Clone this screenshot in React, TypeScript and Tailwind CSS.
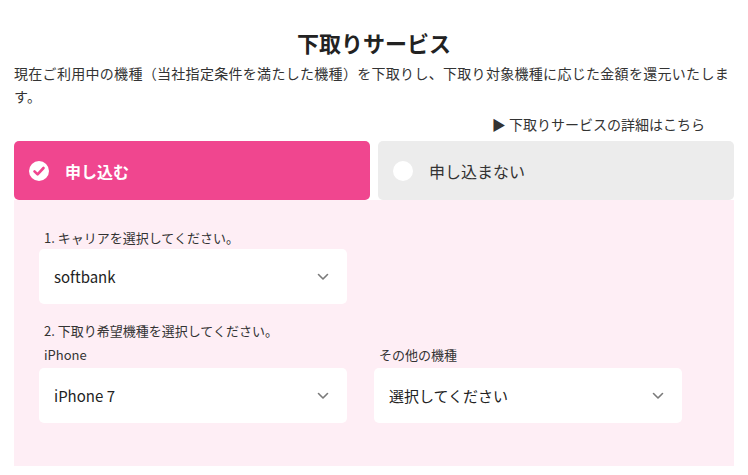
import React from "react";

function Chevron() {
  return (
    <svg width="12" height="8" viewBox="0 0 12 8" className="shrink-0">
      <polyline points="1.5,1.5 6,6 10.5,1.5" fill="none" stroke="#7a7a7a" strokeWidth="1.6" strokeLinecap="round" strokeLinejoin="round" />
    </svg>
  );
}

function Select({ value }: { value: string }) {
  return (
    <div className="flex h-[55px] w-[308px] items-center justify-between rounded-[5px] bg-white pl-[15px] pr-[18px]">
      <span className="text-[15px] leading-[20px] text-[#222]">{value}</span>
      <Chevron />
    </div>
  );
}

export default function App() {
  return (
    <div className="w-[748px] bg-white px-[14px] pt-[28px] font-['Noto_Sans_CJK_JP','Noto_Sans',sans-serif] text-[#333]">
      <h2 className="text-center text-[22px] font-bold leading-[28px] text-[#222]">下取りサービス</h2>
      <p className="mt-[6px] text-[14px] leading-[23px] tracking-[0.3px]">
        現在ご利用中の機種（当社指定条件を満たした機種）を下取りし、下取り対象機種に応じた金額を還元いたします。
      </p>
      <div className="mt-[6px] flex justify-end pr-[29px] text-[14px] leading-[20px]">
        <span>▶ 下取りサービスの詳細はこちら</span>
      </div>
      <div className="mt-[7px] flex gap-[8px]">
        <div className="flex h-[59px] flex-1 items-center gap-[16px] rounded-[5px] bg-[#f0468f] pl-[15px]">
          <svg width="20" height="20" viewBox="0 0 20 20">
            <circle cx="10" cy="10" r="10" fill="#fff" />
            <polyline points="5.5,10.3 8.6,13.4 14.5,7" fill="none" stroke="#f0468f" strokeWidth="2.6" strokeLinecap="round" strokeLinejoin="round" />
          </svg>
          <span className="text-[16px] font-bold leading-[22px] text-white">申し込む</span>
        </div>
        <div className="flex h-[59px] flex-1 items-center gap-[16px] rounded-[5px] bg-[#ececec] pl-[15px]">
          <span className="h-[20px] w-[20px] rounded-full bg-white" />
          <span className="text-[16px] leading-[22px] text-[#333]">申し込まない</span>
        </div>
      </div>
      <div className="bg-[#feeef5] px-[25px] pb-[43px] pt-[29px]">
        <div className="pl-[5px] text-[13px] leading-[18px]">1. キャリアを選択してください。</div>
        <div className="mt-[2px]">
          <Select value="softbank" />
        </div>
        <div className="mt-[18px] pl-[5px] text-[13px] leading-[18px]">2. 下取り希望機種を選択してください。</div>
        <div className="mt-[6px] flex gap-[27px]">
          <div>
            <div className="pl-[5px] text-[13px] leading-[18px]">iPhone</div>
            <div className="mt-[4px]">
              <Select value="iPhone 7" />
            </div>
          </div>
          <div>
            <div className="pl-[5px] text-[13px] leading-[18px]">その他の機種</div>
            <div className="mt-[4px]">
              <Select value="選択してください" />
            </div>
          </div>
        </div>
      </div>
    </div>
  );
}
